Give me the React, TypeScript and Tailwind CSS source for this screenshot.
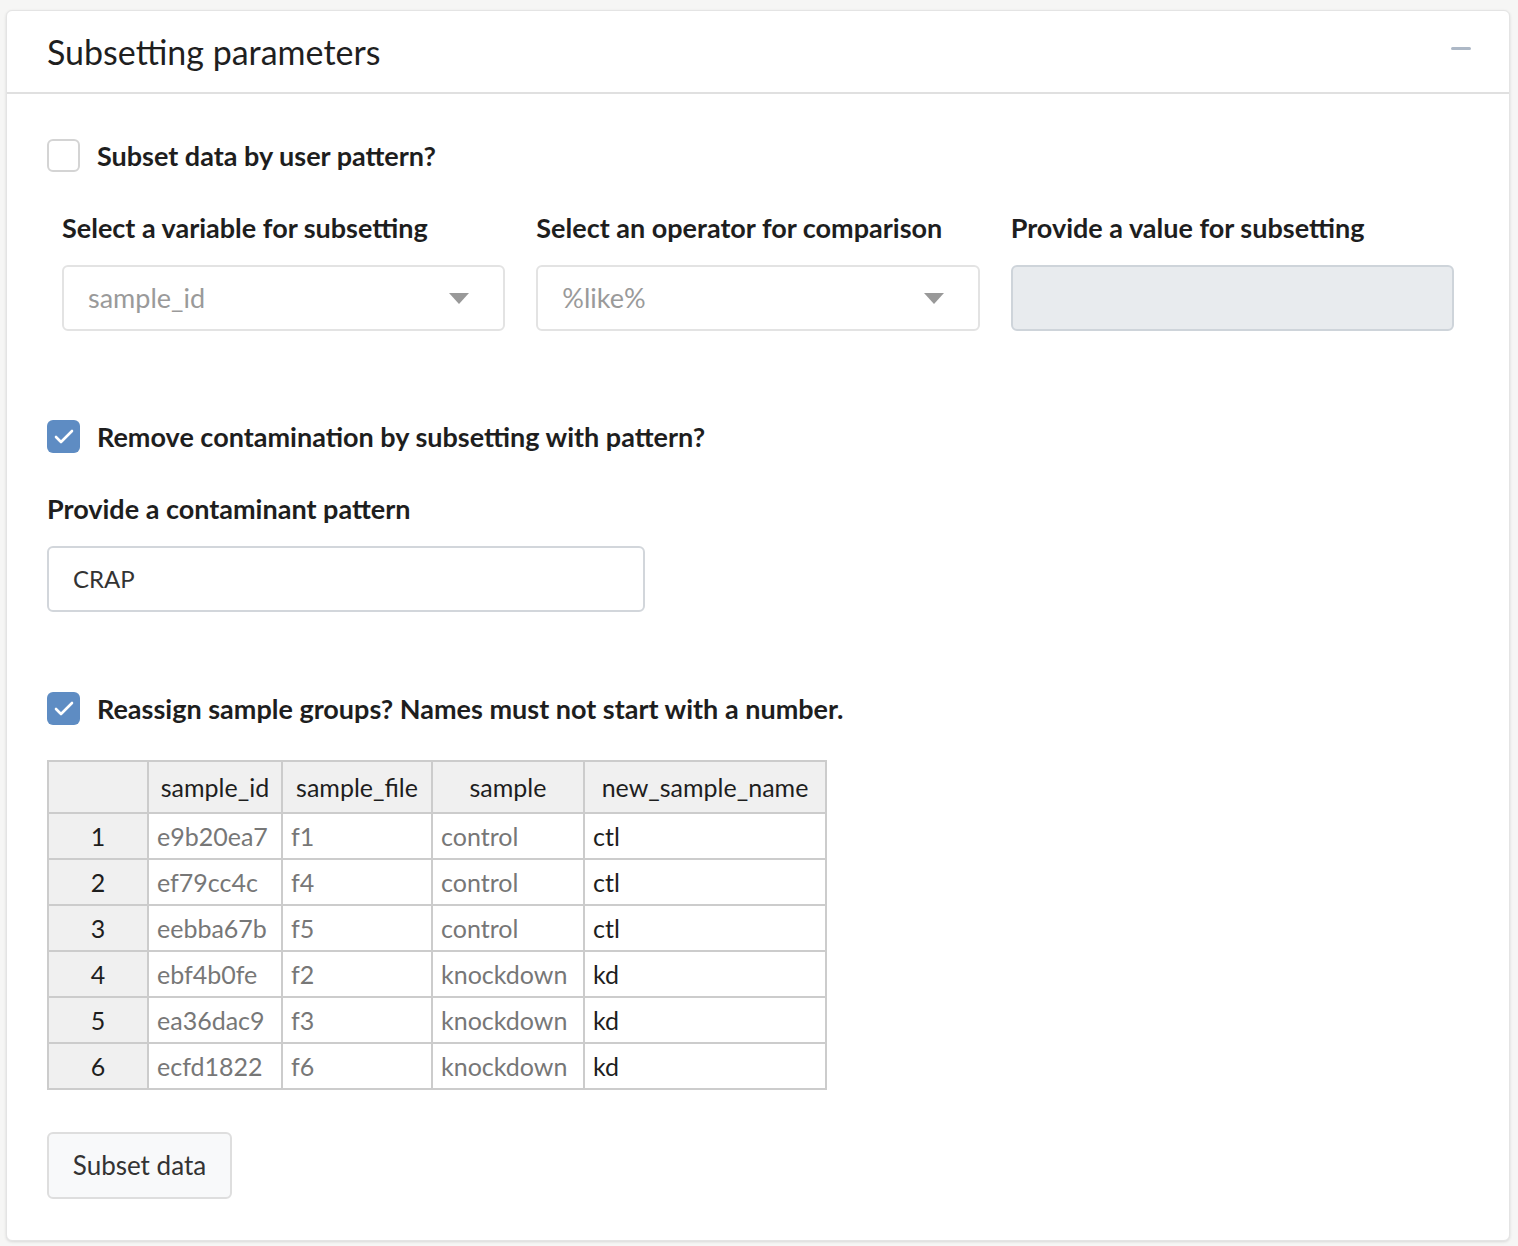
import { Check } from 'lucide-react'

const rows = [
  { n: 1, id: 'e9b20ea7', file: 'f1', sample: 'control', name: 'ctl' },
  { n: 2, id: 'ef79cc4c', file: 'f4', sample: 'control', name: 'ctl' },
  { n: 3, id: 'eebba67b', file: 'f5', sample: 'control', name: 'ctl' },
  { n: 4, id: 'ebf4b0fe', file: 'f2', sample: 'knockdown', name: 'kd' },
  { n: 5, id: 'ea36dac9', file: 'f3', sample: 'knockdown', name: 'kd' },
  { n: 6, id: 'ecfd1822', file: 'f6', sample: 'knockdown', name: 'kd' },
]

const CheckBox = ({ checked }: { checked?: boolean }) =>
  checked ? (
    <span className="flex h-[33px] w-[33px] shrink-0 items-center justify-center rounded-[6px] bg-[#5e8cc3]">
      <Check className="h-[24px] w-[24px] text-white" strokeWidth={2.6} />
    </span>
  ) : (
    <span className="h-[33px] w-[33px] shrink-0 rounded-[6px] border-2 border-[#d4d4d4] bg-white" />
  )

const Select = ({ value }: { value: string }) => (
  <div className="flex h-[66px] items-center justify-between rounded-[6px] border-2 border-[#e3e3e3] bg-white pl-[24px] pr-[34px]">
    <span className="text-[27px] text-[#9a9a9a]">{value}</span>
    <svg width="20" height="11" viewBox="0 0 20 11">
      <path d="M0 0h20L10 11z" fill="#999" />
    </svg>
  </div>
)

const Label = ({ children }: { children: React.ReactNode }) => (
  <div className="h-[32px] text-[27px] font-bold leading-[32px]">{children}</div>
)

export default function App() {
  return (
    <div className="min-h-[1246px] bg-[#f6f6f5] pt-[10px] pl-[6px] pr-[8px] font-['Lato',sans-serif] text-[#1e1e1e]">
      <div className="h-[1231px] w-[1504px] rounded-[6px] border border-[#e4e4e4] bg-white shadow-[0_1px_3px_rgba(0,0,0,0.12)]">
        <div className="flex h-[83px] items-center justify-between border-b-2 border-[#e0e0e0] pl-[40px] pr-[38px]">
          <h1 className="text-[34px] leading-[40px] text-[#1f1f1f]">Subsetting parameters</h1>
          <span className="mb-[6px] h-[3px] w-[20px] rounded bg-[#adb8c6]" />
        </div>

        <div className="px-[40px] pt-[45px]">
          <label className="flex h-[33px] items-center gap-[17px]">
            <CheckBox />
            <span className="text-[27px] font-bold leading-[33px]">Subset data by user pattern?</span>
          </label>

          <div className="mt-[40px] grid grid-cols-3 gap-x-[31px] px-[15px]">
            <div>
              <Label>Select a variable for subsetting</Label>
              <div className="mt-[21px]">
                <Select value="sample_id" />
              </div>
            </div>
            <div>
              <Label>Select an operator for comparison</Label>
              <div className="mt-[21px]">
                <Select value="%like%" />
              </div>
            </div>
            <div>
              <Label>Provide a value for subsetting</Label>
              <div className="mt-[21px] h-[66px] rounded-[6px] border-2 border-[#ced4da] bg-[#e8ebee]" />
            </div>
          </div>

          <label className="mt-[89px] flex h-[33px] items-center gap-[17px]">
            <CheckBox checked />
            <span className="text-[27px] font-bold leading-[33px]">Remove contamination by subsetting with pattern?</span>
          </label>

          <div className="mt-[40px]">
            <Label>Provide a contaminant pattern</Label>
          </div>
          <div className="mt-[21px] flex h-[66px] w-[598px] items-center rounded-[6px] border-2 border-[#d2d6db] pl-[24px] text-[24px] text-[#333]">
            CRAP
          </div>

          <label className="mt-[80px] flex h-[33px] items-center gap-[17px]">
            <CheckBox checked />
            <span className="text-[27px] font-bold leading-[33px]">Reassign sample groups? Names must not start with a number.</span>
          </label>

          <table className="mt-[35px] w-[778px] table-fixed border-collapse text-[25px] leading-[30px]">
            <colgroup>
              <col className="w-[100px]" />
              <col className="w-[134px]" />
              <col className="w-[150px]" />
              <col className="w-[152px]" />
              <col className="w-[242px]" />
            </colgroup>
            <thead>
              <tr className="h-[52px] bg-[#f0f0f0]">
                <th className="border-2 border-[#cccccc] font-normal"></th>
                <th className="border-2 border-[#cccccc] font-normal whitespace-nowrap">sample_id</th>
                <th className="border-2 border-[#cccccc] font-normal whitespace-nowrap">sample_file</th>
                <th className="border-2 border-[#cccccc] font-normal whitespace-nowrap">sample</th>
                <th className="border-2 border-[#cccccc] font-normal whitespace-nowrap">new_sample_name</th>
              </tr>
            </thead>
            <tbody>
              {rows.map((r) => (
                <tr key={r.n} className="h-[46px]">
                  <td className="border-2 border-[#cccccc] bg-[#f0f0f0] text-center">{r.n}</td>
                  <td className="border-2 border-[#cccccc] px-[8px] text-[#777]">{r.id}</td>
                  <td className="border-2 border-[#cccccc] px-[8px] text-[#777]">{r.file}</td>
                  <td className="border-2 border-[#cccccc] px-[8px] text-[#777]">{r.sample}</td>
                  <td className="border-2 border-[#cccccc] px-[8px]">{r.name}</td>
                </tr>
              ))}
            </tbody>
          </table>

          <button className="mt-[42px] h-[67px] w-[185px] rounded-[6px] border-2 border-[#dedede] bg-[#f8f9fa] text-[26px] text-[#333]">
            Subset data
          </button>
        </div>
      </div>
    </div>
  )
}
